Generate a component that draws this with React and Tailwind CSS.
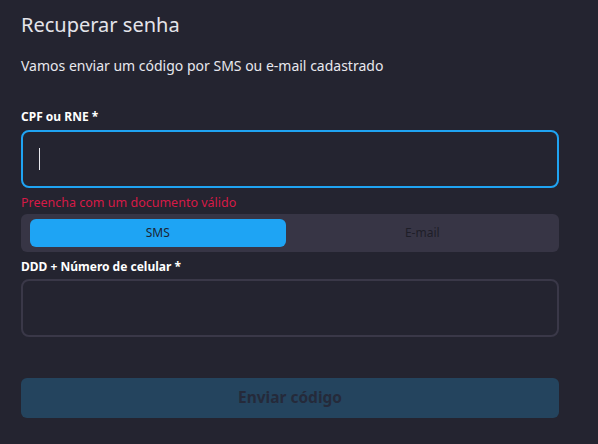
export default function App() {
  return (
    <div className="w-[598px] h-[444px] bg-[#242430] pl-[21px] pr-[39px] pt-[11px] text-[#e8e8ee]" style={{ fontFamily: '"Noto Sans", "Open Sans", sans-serif' }}>
      <h1 className="text-[20px] leading-[28px] text-[#e4e4ea]">Recuperar senha</h1>
      <p className="mt-[17px] text-[14px] leading-[20px] text-[#e8e8ee]">Vamos enviar um código por SMS ou e-mail cadastrado</p>
      <label className="block mt-[33px] text-[12px] leading-[16px] font-bold text-white">CPF ou RNE *</label>
      <div className="mt-[5px] h-[58px] rounded-[8px] border-2 border-[#1fa3f2] flex items-center pl-[16px]">
        <div className="w-px h-[22px] bg-[#e8e8ee]"></div>
      </div>
      <p className="mt-[7px] text-[12.5px] leading-[16px] text-[#d61a47]">Preencha com um documento válido</p>
      <div className="mt-[3px] h-[38px] rounded-[6px] bg-[#373545] flex items-center px-[9px] gap-[9px]">
        <div className="flex-1 h-[28px] rounded-[6px] bg-[#1ea4f4] flex items-center justify-center text-[12px] text-[#1c2433]">SMS</div>
        <div className="flex-1 h-[28px] rounded-[6px] flex items-center justify-center text-[12px] text-[#1e1e28]">E-mail</div>
      </div>
      <label className="block mt-[7px] text-[12px] leading-[16px] font-bold text-white">DDD + Número de celular *</label>
      <div className="mt-[4px] h-[58px] rounded-[8px] border-2 border-[#3a3848]"></div>
      <button className="mt-[41px] w-full h-[40px] rounded-[6px] bg-[#24445e] text-[15.5px] font-bold text-[#252a3a]">Enviar código</button>
    </div>
  );
}
